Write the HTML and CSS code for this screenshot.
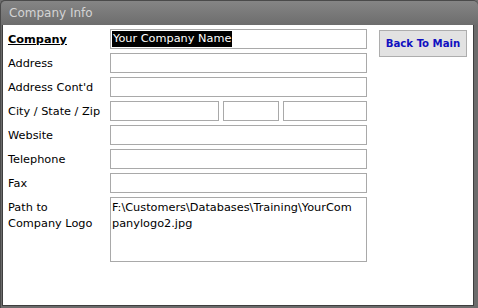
FILE: index.html
```html
<!DOCTYPE html>
<html lang="en">
<head>
    <meta charset="UTF-8">
    <title>Company Info</title>
    <link rel="stylesheet" href="styles.css">
</head>
<body>
    <div class="window">
        <div class="title-bar">Company Info</div>
        <div class="content">
            <div class="form">
                <div class="row">
                    <label class="label label-main">Company</label>
                    <div class="field"><span class="selected">Your Company Name</span></div>
                </div>
                <div class="row">
                    <label class="label">Address</label>
                    <div class="field"></div>
                </div>
                <div class="row">
                    <label class="label">Address Cont'd</label>
                    <div class="field"></div>
                </div>
                <div class="row">
                    <label class="label">City / State / Zip</label>
                    <div class="split">
                        <div class="field city"></div>
                        <div class="field state"></div>
                        <div class="field zip"></div>
                    </div>
                </div>
                <div class="row">
                    <label class="label">Website</label>
                    <div class="field"></div>
                </div>
                <div class="row">
                    <label class="label">Telephone</label>
                    <div class="field"></div>
                </div>
                <div class="row">
                    <label class="label">Fax</label>
                    <div class="field"></div>
                </div>
                <div class="row">
                    <label class="label">Path to<br>Company Logo</label>
                    <div class="field area">F:\Customers\Databases\Training\YourCompanylogo2.jpg</div>
                </div>
            </div>
            <div class="side">
                <button class="btn">Back To Main</button>
            </div>
        </div>
    </div>
</body>
</html>
```

FILE: styles.css
```css
html, body {
    margin: 0;
    padding: 0;
}
body {
    font-family: "DejaVu Sans", Tahoma, sans-serif;
    font-size: 11.3px;
    background: #6e6e6e;
}
.window {
    width: 478px;
    height: 308px;
    box-sizing: border-box;
    background: #6c6c6c;
    border-left: 1px solid #4a4a4a;
    border-top: 1px solid #4a4a4a;
    border-radius: 5px 5px 0 0;
    padding: 0 4px 2px 1px;
    display: flex;
    flex-direction: column;
}
.title-bar {
    height: 24px;
    line-height: 24px;
    color: #d4d4d4;
    font-size: 12px;
    background: linear-gradient(#858585, #6d6d6d);
    margin: 0 -4px 0 -1px;
    padding-left: 8px;
    border-radius: 5px 5px 0 0;
}
.content {
    flex: 1;
    background: #fff;
    border: 1px solid #3e3e3e;
    border-top: none;
    display: flex;
    padding: 4px 0 0 5px;
}
.form {
    width: 359px;
    display: flex;
    flex-direction: column;
    gap: 4px;
}
.row {
    display: flex;
    align-items: flex-start;
}
.label {
    width: 102px;
    padding-top: 3px;
    color: #000;
    line-height: 16px;
}
.label-main {
    font-weight: bold;
    text-decoration: underline;
}
.field {
    flex: 1;
    height: 20px;
    box-sizing: border-box;
    border: 1px solid #a9a9a9;
    padding: 1px 2px 1px 1px;
    line-height: 16px;
    white-space: nowrap;
}
.selected {
    background: #000;
    color: #fff;
    display: inline-block;
    padding: 0 1px;
}
.split {
    flex: 1;
    display: flex;
    gap: 4px;
}
.city {
    flex: none;
    width: 109px;
}
.state {
    flex: none;
    width: 56px;
}
.zip {
    flex: 1;
}
.area {
    height: 65px;
    white-space: normal;
    word-break: break-all;
    padding: 2px 8px 0 1px;
}
.side {
    padding: 1px 0 0 12px;
}
.btn {
    width: 88px;
    height: 27px;
    background: #e2e2e2;
    border: 1px solid #adadad;
    color: #1010c0;
    font-family: "DejaVu Sans", Tahoma, sans-serif;
    font-stretch: condensed;
    font-weight: bold;
    font-size: 11.3px;
    white-space: nowrap;
    padding: 0;
}
```
